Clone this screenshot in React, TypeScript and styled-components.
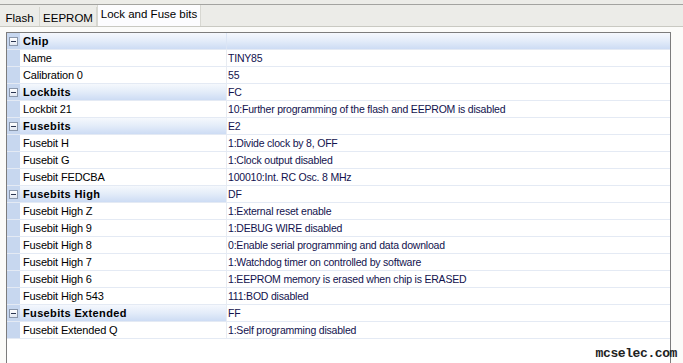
import React from "react";
import styled, { createGlobalStyle } from "styled-components";

const Global = createGlobalStyle`
  html, body { margin: 0; padding: 0; overflow: hidden; }
  body {
    background: #fbfbf9;
    font-family: Tahoma, "Liberation Sans", Arial, sans-serif;
    font-size: 11px;
    width: 683px;
    height: 363px;
  }
`;

const Page = styled.div`
  position: relative;
  width: 683px;
  height: 363px;
  overflow: hidden;
`;

const TabStrip = styled.div`
  height: 27px;
  box-sizing: border-box;
  background: #ecece8;
  padding-top: 4px;
  border-bottom: 1px solid #c9c9c2;
`;

const TabRow = styled.div`
  display: flex;
  align-items: flex-end;
  height: 22px;
  border-top: 1px solid #a3a3a0;
  box-sizing: border-box;
`;

const Tab = styled.div<{ $active?: boolean; $w: number }>`
  box-sizing: border-box;
  width: ${(p) => p.$w}px;
  height: ${(p) => (p.$active ? 21 : 19)}px;
  padding-top: ${(p) => (p.$active ? 2 : 4)}px;
  text-align: center;
  background: ${(p) => (p.$active ? "#fcfcfe" : "#ecece8")};
  border-right: 1px solid ${(p) => (p.$active ? "#d8d8d2" : "#d6d6cf")};
  border-left: ${(p) => (p.$active ? "1px solid #d8d8d2" : "none")};
  color: #000;
  white-space: nowrap;
  font-size: 11.5px;
  line-height: 14px;
`;

const Content = styled.div`
  padding: 5px 0 0 6px;
`;

const Grid = styled.div`
  width: 665px;
  height: 340px;
  box-sizing: border-box;
  border: 1px solid #7c7c7c;
  border-bottom: none;
  background: #ffffff;
`;

const Row = styled.div`
  display: grid;
  grid-template-columns: 13px 206px 1px 1fr;
  height: 17px;
  box-sizing: border-box;
  border-bottom: 1px solid #e4eaf4;
`;

const Margin = styled.div`
  background: #c7d7ef;
  display: flex;
  align-items: center;
  justify-content: center;
`;

const catBg = "linear-gradient(to bottom, #f5f8fd 0%, #e3ecf9 50%, #cddcf4 100%)";

const Label = styled.div<{ $cat?: boolean }>`
  padding-left: 3px;
  line-height: 16px;
  white-space: nowrap;
  overflow: hidden;
  color: #000;
  font-weight: ${(p) => (p.$cat ? 700 : 400)};
  letter-spacing: ${(p) => (p.$cat ? "0.35px" : "-0.15px")};
  background: ${(p) => (p.$cat ? catBg : "transparent")};
`;

const Sep = styled.div<{ $cat?: boolean }>`
  background: ${(p) => (p.$cat ? "#dbe5f5" : "#e8ecf2")};
`;

const Value = styled.div<{ $cat?: boolean }>`
  padding-left: 1px;
  line-height: 16px;
  font-size: 10.5px;
  letter-spacing: -0.2px;
  white-space: nowrap;
  overflow: hidden;
  color: #12124e;
  background: ${(p) => (p.$cat ? catBg : "transparent")};
`;

const Expander = styled.div`
  width: 9px;
  height: 9px;
  box-sizing: border-box;
  border: 1px solid #8a97ab;
  background: linear-gradient(to bottom, #ffffff, #e2e8f2);
  display: flex;
  align-items: center;
  justify-content: center;
  &::after {
    content: "";
    width: 5px;
    height: 1px;
    background: #2a3550;
  }
`;

const Watermark = styled.div`
  position: absolute;
  right: 6px;
  bottom: 2px;
  font-family: "Liberation Mono", "Courier New", monospace;
  font-weight: 700;
  font-size: 13px;
  color: #222;
  letter-spacing: -0.4px;
`;

type Item = { cat?: boolean; label: string; value?: string };

const items: Item[] = [
  { cat: true, label: "Chip" },
  { label: "Name", value: "TINY85" },
  { label: "Calibration 0", value: "55" },
  { cat: true, label: "Lockbits", value: "FC" },
  { label: "Lockbit 21", value: "10:Further programming of the flash and EEPROM is disabled" },
  { cat: true, label: "Fusebits", value: "E2" },
  { label: "Fusebit H", value: "1:Divide clock by 8, OFF" },
  { label: "Fusebit G", value: "1:Clock output disabled" },
  { label: "Fusebit FEDCBA", value: "100010:Int. RC Osc. 8 MHz" },
  { cat: true, label: "Fusebits High", value: "DF" },
  { label: "Fusebit High Z", value: "1:External reset enable" },
  { label: "Fusebit High 9", value: "1:DEBUG WIRE disabled" },
  { label: "Fusebit High 8", value: "0:Enable serial programming and data download" },
  { label: "Fusebit High 7", value: "1:Watchdog timer on controlled by software" },
  { label: "Fusebit High 6", value: "1:EEPROM memory is erased when chip is ERASED" },
  { label: "Fusebit High 543", value: "111:BOD disabled" },
  { cat: true, label: "Fusebits Extended", value: "FF" },
  { label: "Fusebit Extended Q", value: "1:Self programming disabled" },
];

export default function App() {
  return (
    <Page>
      <Global />
      <TabStrip>
        <TabRow>
          <Tab $w={40}>Flash</Tab>
          <Tab $w={57}>EEPROM</Tab>
          <Tab $w={104} $active>Lock and Fuse bits</Tab>
        </TabRow>
      </TabStrip>
      <Content>
        <Grid>
          {items.map((it, i) => {
            const catFull = it.cat && !it.value;
            return (
              <Row key={i}>
                <Margin>{it.cat && <Expander />}</Margin>
                <Label $cat={it.cat}>{it.label}</Label>
                <Sep $cat={catFull} />
                <Value $cat={catFull}>{it.value ?? ""}</Value>
              </Row>
            );
          })}
        </Grid>
      </Content>
      <Watermark>mcselec.com</Watermark>
    </Page>
  );
}
